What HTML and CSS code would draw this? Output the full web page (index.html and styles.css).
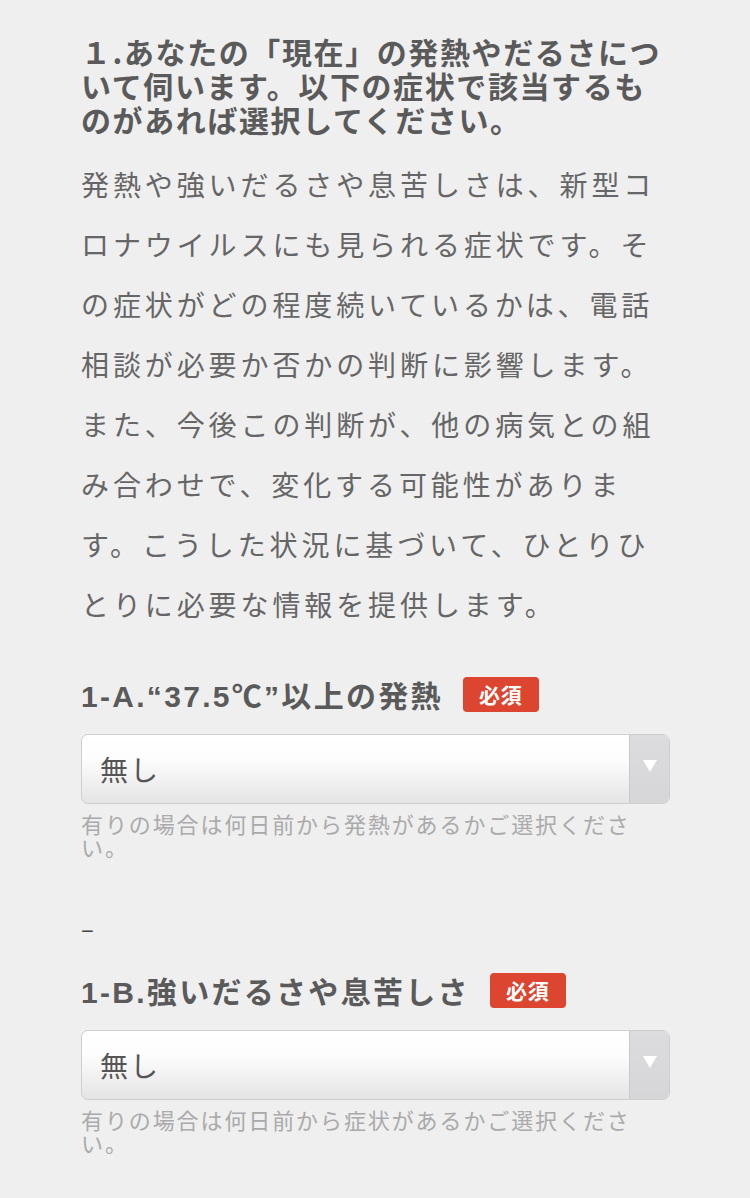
FILE: index.html
```html
<!DOCTYPE html>
<html lang="ja">
<head>
<meta charset="utf-8">
<link rel="stylesheet" href="styles.css">
</head>
<body>
<main class="page">
  <h1 class="q-title">１.あなたの「現在」の発熱やだるさについて伺います。以下の症状で該当するものがあれば選択してください。</h1>
  <p class="q-desc">発熱や強いだるさや息苦しさは、新型コロナウイルスにも見られる症状です。その症状がどの程度続いているかは、電話相談が必要か否かの判断に影響します。また、今後この判断が、他の病気との組み合わせで、変化する可能性があります。こうした状況に基づいて、ひとりひとりに必要な情報を提供します。</p>

  <section class="field field-a">
    <div class="field-label"><span class="label-text">1-A.“37.5℃”以上の発熱</span><span class="badge">必須</span></div>
    <div class="select">
      <span class="select-value">無し</span>
      <span class="select-arrow"><svg width="14" height="12" viewBox="0 0 14 12"><polygon points="0,0 14,0 7,12" fill="#fff"/></svg></span>
    </div>
    <p class="help">有りの場合は何日前から発熱があるかご選択ください。</p>
  </section>

  <div class="dash">–</div>

  <section class="field field-b">
    <div class="field-label"><span class="label-text">1-B.強いだるさや息苦しさ</span><span class="badge">必須</span></div>
    <div class="select">
      <span class="select-value">無し</span>
      <span class="select-arrow"><svg width="14" height="12" viewBox="0 0 14 12"><polygon points="0,0 14,0 7,12" fill="#fff"/></svg></span>
    </div>
    <p class="help">有りの場合は何日前から症状があるかご選択ください。</p>
  </section>
</main>
</body>
</html>
```

FILE: styles.css
```css
html, body {
  margin: 0;
  padding: 0;
  background: #efefef;
}
body {
  font-family: "Noto Sans CJK JP", "Noto Sans", sans-serif;
  color: #5a5a5a;
}
.page {
  width: 589px;
  padding: 34px 0 0 81px;
}
.q-title {
  margin: 0;
  font-size: 30px;
  line-height: 34px;
  font-weight: 700;
  letter-spacing: 1.6px;
  color: #5a5a5a;
}
.q-desc {
  margin: 18px 0 0;
  font-size: 28px;
  line-height: 60px;
  font-weight: 400;
  letter-spacing: 3.9px;
  color: #666;
}
.field-a {
  margin-top: 40px;
}
.field-label {
  display: flex;
  align-items: center;
  gap: 20px;
  height: 40px;
  font-size: 30px;
  font-weight: 700;
  color: #5a5a5a;
}
.label-text {
  font-family: "Liberation Sans", "Noto Sans CJK JP", sans-serif;
  letter-spacing: 2.3px;
}
.badge {
  display: inline-flex;
  align-items: center;
  justify-content: center;
  width: 76px;
  height: 35px;
  border-radius: 4px;
  background: #dc4530;
  color: #fff;
  font-size: 21px;
  font-weight: 700;
  letter-spacing: 1px;
}
.select {
  margin-top: 20px;
  height: 68px;
  display: flex;
  border: 1px solid #cfcfcf;
  border-radius: 7px;
  background: linear-gradient(#ffffff 0%, #fdfdfd 35%, #e4e4e4 100%);
  overflow: hidden;
  box-sizing: content-box;
}
.select-value {
  flex: 1;
  display: flex;
  align-items: center;
  padding-left: 18px;
  font-size: 28px;
  color: #555;
  letter-spacing: 2px;
}
.select-arrow {
  width: 40px;
  display: flex;
  align-items: flex-start;
  justify-content: center;
  padding-top: 25px;
  box-sizing: border-box;
  border-left: 1px solid #c9c9c9;
  background: linear-gradient(#dcdcde, #d6d6d8);
}
.help {
  margin: 8px 0 0;
  font-size: 22px;
  line-height: 23px;
  letter-spacing: 1.9px;
  color: #aaa;
}
.dash {
  margin-top: 58px;
  font-size: 24px;
  line-height: 24px;
  color: #444;
}
.field-b {
  margin-top: 30px;
}
```
